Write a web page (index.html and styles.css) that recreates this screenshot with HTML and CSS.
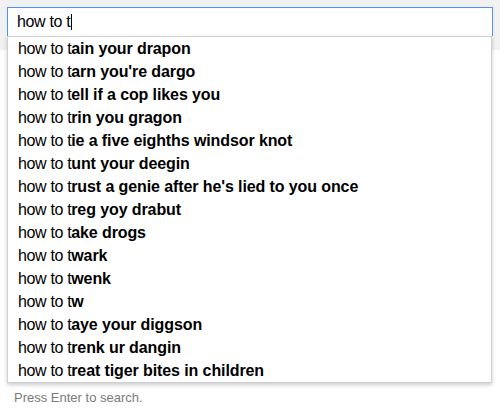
FILE: index.html
```html
<!DOCTYPE html>
<html>
<head>
<meta charset="utf-8">
<link rel="stylesheet" href="styles.css">
</head>
<body>
<div class="page">
  <div class="search">
    <div class="input"><span class="typed">how to t</span><span class="caret"></span></div>
    <ul class="suggest">
      <li><span class="q">how to t</span><b>ain your drapon</b></li>
      <li><span class="q">how to t</span><b>arn you're dargo</b></li>
      <li><span class="q">how to t</span><b>ell if a cop likes you</b></li>
      <li><span class="q">how to t</span><b>rin you gragon</b></li>
      <li><span class="q">how to t</span><b>ie a five eighths windsor knot</b></li>
      <li><span class="q">how to t</span><b>unt your deegin</b></li>
      <li><span class="q">how to t</span><b>rust a genie after he's lied to you once</b></li>
      <li><span class="q">how to t</span><b>reg yoy drabut</b></li>
      <li><span class="q">how to t</span><b>ake drogs</b></li>
      <li><span class="q">how to t</span><b>wark</b></li>
      <li><span class="q">how to t</span><b>wenk</b></li>
      <li><span class="q">how to t</span><b>w</b></li>
      <li><span class="q">how to t</span><b>aye your diggson</b></li>
      <li><span class="q">how to t</span><b>renk ur dangin</b></li>
      <li><span class="q">how to t</span><b>reat tiger bites in children</b></li>
    </ul>
  </div>
  <p class="hint">Press Enter to search.</p>
</div>
</body>
</html>
```
FILE: styles.css
```css
html, body {
  margin: 0;
  padding: 0;
}
body {
  width: 500px;
  height: 409px;
  background: linear-gradient(#f1f1f1 0, #f1f1f1 50px, #ffffff 50px);
  font-family: "Liberation Sans", Arial, sans-serif;
  color: #000;
  overflow: hidden;
}
.page {
  padding: 7px 7px 0 7px;
}
.search {
  display: flex;
  flex-direction: column;
}
.input {
  display: flex;
  align-items: center;
  height: 28px;
  border: 1px solid #4d90fe;
  border-bottom: none;
  background: #fff;
  padding-left: 9px;
  font-size: 16px;
  line-height: 28px;
}
.typed {
  letter-spacing: -0.35px;
}
.caret {
  width: 1px;
  height: 16px;
  background: #000;
  margin-left: 1px;
}
.suggest {
  list-style: none;
  margin: 0;
  padding: 0;
  background: #fff;
  border: 1px solid #d0d0d0;
  margin-right: 1px;
  box-shadow: 0 2px 4px rgba(0, 0, 0, 0.2);
}
.suggest li {
  height: 23px;
  line-height: 23px;
  font-size: 16px;
  padding-left: 10px;
  white-space: nowrap;
}
.suggest .q {
  letter-spacing: -0.35px;
}
.suggest b {
  font-weight: bold;
  letter-spacing: -0.1px;
}
.hint {
  margin: 7px 0 0 7px;
  font-size: 13px;
  line-height: 16px;
  color: #7a7a7a;
}
```
